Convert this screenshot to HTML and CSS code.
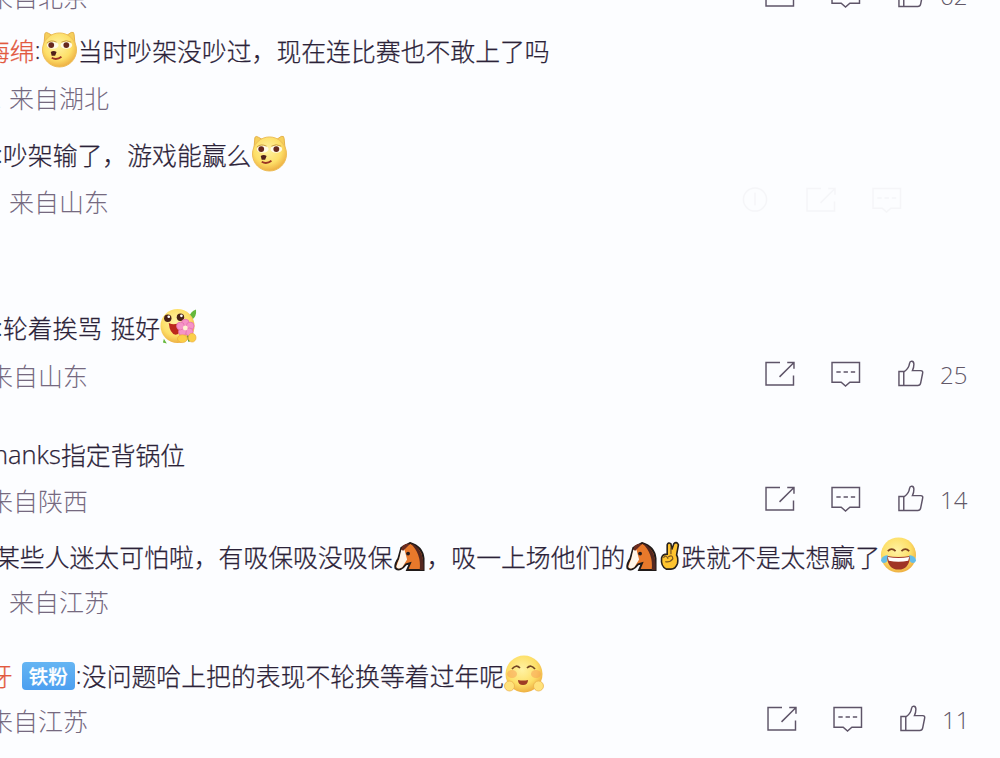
FILE: index.html
```
<!DOCTYPE html>
<html lang="zh-CN">
<head>
  <meta charset="utf-8">
  <title>评论</title>
  <link rel="stylesheet" href="styles.css">
</head>
<body>
  <!-- 图标 -->
  <svg class="defs" width="0" height="0">
    <defs>
      <radialGradient id="face" cx="45%" cy="38%" r="62%">
        <stop offset="0" stop-color="#fff3a4"/>
        <stop offset="0.65" stop-color="#fddf68"/>
        <stop offset="1" stop-color="#eeb043"/>
      </radialGradient>
      <symbol id="share" viewBox="0 0 32 28">
        <path d="M16 2.5H1.5V26H30V16M15.5 17.5L30 3M23.5 2.5H30.5V9"/>
      </symbol>
      <symbol id="comment" viewBox="0 0 32 28">
        <path d="M1.5 2.5H30V23H20L15.5 27L11 23H1.5Z"/>
        <path d="M6 12.5h4.5M13.5 12.5h4.5M21 12.5h4.5"/>
      </symbol>
      <symbol id="like" viewBox="0 0 28 28">
        <path d="M1.5 12H7C10 10 12 7 12.5 3.5C13 .5 17 .5 17 4.5C17 7 16.5 9 15.5 11H24C26 11 26.5 12 26 14L24 24Q23.5 26.5 21 26.5H1.5ZM6.5 12V26.5"/>
      </symbol>
      <symbol id="doge" viewBox="0 0 38 38">
        <path d="M3 15L4 3Q5 1 8 3L13 6ZM25 6L31 2Q34 1 34 4L35 15Z" fill="#f6cf5b" stroke="#e3b047"/>
        <circle cx="19" cy="20" r="17.5" fill="url(#face)" stroke="#edbd58"/>
        <ellipse cx="12" cy="15" rx="6" ry="3.8" fill="#fffbe8"/>
        <ellipse cx="26" cy="15" rx="6" ry="3.8" fill="#fffbe8"/>
        <path d="M6 13Q10 9 16 12M21 12Q26 9 31 12" fill="none" stroke="#c99a3d"/>
        <circle cx="10.5" cy="15" r="3" fill="#66281e"/>
        <circle cx="26" cy="15" r="3" fill="#66281e"/>
        <path d="M10 22Q13 20 16 22L14.5 26H11Z" fill="#50201a"/>
        <path d="M11 28Q16 31 21 27" fill="none" stroke="#9b3524" stroke-width="1.8"/>
      </symbol>
      <symbol id="flower" viewBox="0 0 38 38">
        <path d="M30 10Q31 4 37 2Q38 10 32 13ZM4 32L7 37L3 36Z" fill="#65b83b"/>
        <circle cx="18" cy="19" r="17.5" fill="url(#face)"/>
        <circle cx="8" cy="11" r="3.8" fill="#492117"/>
        <circle cx="21" cy="10" r="3.8" fill="#492117"/>
        <circle cx="9" cy="9.5" r="1.4" fill="#fff"/>
        <circle cx="22" cy="8.5" r="1.4" fill="#fff"/>
        <path d="M9 16Q15 19 21 15Q23 27 16 28Q10 27 9 16Z" fill="#bc281b"/>
        <path d="M28 25L30 35" stroke="#4a9b34" stroke-width="2"/>
        <g fill="#f693c7" stroke="#e570ac" stroke-width=".8">
          <circle cx="26" cy="16" r="4"/><circle cx="31" cy="19" r="4"/><circle cx="30" cy="25" r="4"/><circle cx="23" cy="25" r="4"/><circle cx="21" cy="19" r="4"/>
        </g>
        <circle cx="26" cy="21" r="2.5" fill="#fff0d0"/>
        <ellipse cx="23" cy="32" rx="5" ry="4" fill="#fbcf49" stroke="#e9a63b" stroke-width=".6"/>
        <ellipse cx="33" cy="31" rx="4" ry="4.5" fill="#fbcf49" stroke="#e9a63b" stroke-width=".6"/>
      </symbol>
      <symbol id="horse" viewBox="0 0 32 32">
        <path d="M7 7L16 2Q29 6 30 18V30H13L16 23L12 24Q6 32 1 28Q0 24 4 18Z" fill="#e8792b" stroke="#201a19" stroke-width="2"/>
        <path d="M16 2Q31 7 30 30H26Q28 13 16 2Z" fill="#54271f"/>
        <path d="M7 9L10 8L13 19L8 27Q2 30 2 26L5 18Z" fill="#fff5e8"/>
        <path d="M7 9Q8 2 16 3L9 10Z" fill="#6a2c20"/>
        <circle cx="14" cy="13" r="2" fill="#271b1b"/>
      </symbol>
      <symbol id="victory" viewBox="0 0 22 32">
        <path d="M2 18Q3 14 8 14L8 4Q9 1 12 3L13 9L15 3Q18 0 20 4L18 15Q20 18 19 24Q17 30 12 30H7Q1 27 2 18Z" fill="#ffc42e" stroke="#29221c" stroke-width="1.7"/>
        <path d="M12 7V14M4 18Q7 14 9 19M9 17Q14 14 14 19Q11 23 6 22" fill="none" stroke="#7c571e" stroke-width="1.3"/>
      </symbol>
      <symbol id="joy" viewBox="0 0 38 38">
        <circle cx="19" cy="19" r="18" fill="url(#face)"/>
        <path d="M8 15Q12 11 16 15M22 15Q26 11 30 15" fill="none" stroke="#7c4220" stroke-width="1.8"/>
        <path d="M7 20Q19 22 31 20Q30 34 19 34Q8 34 7 20Z" fill="#a03425"/>
        <path d="M8 21Q19 23 30 21L29 25Q19 27 9 25Z" fill="#fff"/>
        <path d="M8 19Q1 20 1 25Q3 29 7 26ZM30 19Q37 20 37 25Q35 29 31 26Z" fill="#65bde9"/>
      </symbol>
      <symbol id="hug" viewBox="0 0 40 38">
        <circle cx="20" cy="19" r="18.5" fill="url(#face)"/>
        <path d="M8 14Q12 9 16 13M23 13Q27 9 31 14" fill="none" stroke="#714423" stroke-width="1.7"/>
        <ellipse cx="8" cy="19" rx="5" ry="4" fill="#f79b55" opacity=".5"/>
        <ellipse cx="32" cy="19" rx="5" ry="4" fill="#f79b55" opacity=".5"/>
        <path d="M14 25Q19 26 24 25Q24 30 19 30Q14 30 14 25Z" fill="#9f3c25"/>
        <circle cx="5.5" cy="31" r="5" fill="#ffe27b" stroke="#e9ae46" stroke-width=".7"/>
        <circle cx="34.5" cy="31" r="5" fill="#ffe27b" stroke="#e9ae46" stroke-width=".7"/>
      </symbol>
    </defs>
  </svg>

  <div class="list">
    <div class="comment first">
      <div class="meta"><span class="from cut">来自北京</span>
        <div class="actions"><svg class="icon"><use href="#share"/></svg><svg class="icon"><use href="#comment"/></svg><svg class="icon like"><use href="#like"/></svg><span class="num">62</span></div>
      </div>
    </div>

    <div class="comment c1">
      <div class="text"><span class="name">海绵</span><span class="colon">:</span><svg class="emoji"><use href="#doge"/></svg>当时吵架没吵过，现在连比赛也不敢上了吗</div>
      <div class="meta"><span class="time">1</span><span class="from">来自湖北</span></div>
    </div>

    <div class="comment c2">
      <div class="text"><span class="colon">:</span>吵架输了，游戏能赢么<svg class="emoji"><use href="#doge"/></svg></div>
      <div class="meta"><span class="from">来自山东</span>
        <div class="actions faint"><svg class="icon" viewBox="0 0 32 28"><circle cx="16" cy="14" r="12"/><path d="M16 7v13"/></svg><svg class="icon"><use href="#share"/></svg><svg class="icon"><use href="#comment"/></svg></div>
      </div>
    </div>

    <div class="comment c3">
      <div class="text"><span class="colon">:</span>轮着挨骂<span class="space"></span>挺好<svg class="emoji"><use href="#flower"/></svg></div>
      <div class="meta"><span class="from cut">来自山东</span>
        <div class="actions"><svg class="icon"><use href="#share"/></svg><svg class="icon"><use href="#comment"/></svg><svg class="icon like"><use href="#like"/></svg><span class="num">25</span></div>
      </div>
    </div>

    <div class="comment c4">
      <div class="text"><span class="latin">hanks</span>指定背锅位</div>
      <div class="meta"><span class="from cut">来自陕西</span>
        <div class="actions"><svg class="icon"><use href="#share"/></svg><svg class="icon"><use href="#comment"/></svg><svg class="icon like"><use href="#like"/></svg><span class="num">14</span></div>
      </div>
    </div>

    <div class="comment c5">
      <div class="text">某些人迷太可怕啦，有吸保吸没吸保<svg class="emoji horse"><use href="#horse"/></svg>，吸一上场他们的<svg class="emoji horse"><use href="#horse"/></svg><svg class="emoji hand"><use href="#victory"/></svg>跌就不是太想赢了<svg class="emoji"><use href="#joy"/></svg></div>
      <div class="meta"><span class="from">来自江苏</span></div>
    </div>

    <div class="comment c6">
      <div class="text"><span class="name">牙</span><span class="badge">铁粉</span><span class="colon">:</span>没问题哈上把的表现不轮换等着过年呢<svg class="emoji hug"><use href="#hug"/></svg></div>
      <div class="meta"><span class="from cut">来自江苏</span>
        <div class="actions"><svg class="icon"><use href="#share"/></svg><svg class="icon"><use href="#comment"/></svg><svg class="icon like"><use href="#like"/></svg><span class="num">11</span></div>
      </div>
    </div>
  </div>
</body>
</html>
```
FILE: styles.css
```
body {
  margin: 0;
  background: #fcfdff;
  color: #2b2238;
  font-family: "Noto Sans CJK SC", sans-serif;
  font-weight: 300;
  overflow: hidden;
}

.defs {
  display: block;
}

.list {
  height: 758px;
  overflow: hidden;
}

.text,
.meta {
  display: flex;
  align-items: center;
  height: 40px;
  line-height: 40px;
  white-space: nowrap;
}

.text {
  font-size: 24.85px;
  -webkit-text-stroke: 0.25px;
}

.meta {
  color: #75697f;
  font-size: 25px;
}

.name {
  color: #e2593f;
}

.colon {
  width: 6px;
  font-family: "Open Sans", sans-serif;
  font-size: 24px;
}

.from {
  margin-left: 9px;
}

.from.cut {
  margin-left: -12px;
}

.time {
  width: 0;
  margin-left: -12px;
  margin-right: 12px;
}

.space {
  width: 8px;
}

.latin {
  width: 68px;
  font-family: "Open Sans", sans-serif;
  font-size: 25.5px;
}

.emoji {
  flex: none;
  width: 37px;
  height: 38px;
  margin-top: -2px;
}

.horse {
  width: 32px;
  height: 31px;
  margin: 1px 1px 0;
}

.hand {
  width: 22px;
  height: 30px;
  margin: 0;
}

.hug {
  width: 40px;
}

.badge {
  width: 53px;
  height: 28px;
  margin: 2px 1px 0 9px;
  border-radius: 4px;
  background: linear-gradient(#65b5f3, #4c9ff0);
  color: #fff;
  font-size: 19.5px;
  font-weight: 500;
  line-height: 28px;
  text-align: center;
}

.actions {
  display: flex;
  align-items: center;
  width: 236px;
  margin-left: auto;
  margin-top: -3px;
}

.icon {
  width: 32px;
  height: 27px;
  margin-right: 34px;
  fill: none;
  stroke: #5e5468;
  stroke-width: 1.5;
}

.icon.like {
  width: 28px;
  margin-left: 1px;
  margin-right: 15px;
}

.num {
  margin-top: 2px;
  color: #625868;
  font-family: "Open Sans", sans-serif;
  font-size: 24px;
}

.faint {
  width: 261px;
  opacity: 0.04;
}

.first {
  margin-top: -24px;
}

.c1 {
  margin-top: 14px;
}

.c1 .text {
  margin-left: -15px;
}

.c1 .meta {
  margin-top: 7px;
}

.c2 {
  margin-top: 17px;
}

.c2 .text,
.c3 .text {
  margin-left: -3px;
}

.c2 .meta {
  margin-top: 7px;
}

.c3 {
  margin-top: 86px;
}

.c3 .meta {
  margin-top: 8px;
}

.c4 {
  margin-top: 39px;
}

.c4 .text {
  margin-left: -7px;
}

.c4 .meta {
  margin-top: 6px;
}

.c5 {
  margin-top: 16px;
}

.c5 .text {
  margin-left: -5px;
}

.c5 .meta {
  margin-top: 5px;
}

.c6 {
  margin-top: 34px;
}

.c6 .text {
  margin-left: -12px;
}

.c6 .meta {
  margin-top: 5px;
}

.c6 .actions {
  width: 234px;
}
```
